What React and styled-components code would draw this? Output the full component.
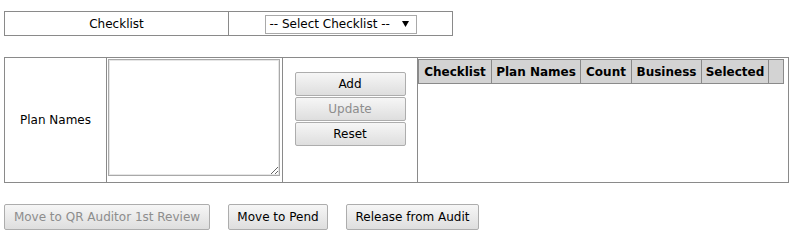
import React from "react";
import styled, { createGlobalStyle } from "styled-components";

const GlobalStyle = createGlobalStyle`
  html, body {
    margin: 0;
    padding: 0;
    background: #fff;
  }
  body {
    font-family: "DejaVu Sans", Verdana, sans-serif;
    font-size: 12px;
    color: #000;
  }
`;

const Page = styled.div`
  padding: 11px 0 0 4px;
`;

const TopTable = styled.div`
  box-sizing: border-box;
  width: 449px;
  height: 25px;
  border: 1px solid #8a8a8a;
  display: grid;
  grid-template-columns: 224px 1fr;
`;

const Cell = styled.div`
  box-sizing: border-box;
  display: flex;
  align-items: ${p => (p.$top ? "flex-start" : "center")};
  justify-content: center;
  border-right: ${p => (p.$last ? "none" : "1px solid #8a8a8a")};
`;

const FakeSelect = styled.div`
  box-sizing: border-box;
  width: 152px;
  height: 19px;
  margin-top: 1px;
  border: 1px solid #a9a9a9;
  display: flex;
  align-items: center;
  justify-content: space-between;
  padding: 0 7px 0 4px;
  background: #fff;
  color: #000;
`;

const MainTable = styled.div`
  box-sizing: border-box;
  margin-top: 21px;
  width: 785px;
  height: 126px;
  border: 1px solid #8a8a8a;
  display: grid;
  grid-template-columns: 102px 176px 135px 1fr;
`;

const TextCell = styled(Cell)`
  align-items: flex-start;
  justify-content: flex-start;
  padding: 1px 0 0 1px;
`;

const PlanArea = styled.textarea`
  box-sizing: border-box;
  width: 172px;
  height: 117px;
  margin: 0;
  border: 1px solid #a9a9a9;
  outline: 1px solid #e6e6e6;
  outline-offset: -2px;
  resize: both;
  font-family: "DejaVu Sans", Verdana, sans-serif;
  font-size: 12px;
`;

const ButtonStack = styled(Cell)`
  flex-direction: column;
  align-items: center;
  justify-content: flex-start;
  padding-top: 14px;
  gap: 1px;
`;

const Button = styled.button`
  box-sizing: border-box;
  width: ${p => p.$w}px;
  height: ${p => p.$h || 24}px;
  margin: 0;
  padding: 0;
  border: 1px solid #adadad;
  border-radius: 2px;
  background: linear-gradient(#f6f6f6, #dedede);
  font-family: "DejaVu Sans", Verdana, sans-serif;
  font-size: 12px;
  color: ${p => (p.disabled ? "#8d8d8d" : "#000")};
`;

const GridCell = styled.div`
  padding-top: 1px;
`;

const HeaderRow = styled.div`
  box-sizing: border-box;
  display: flex;
  width: 366px;
  height: 25px;
  border: 1px solid #8a8a8a;
  border-right: none;
  background: #d3d3d3;
`;

const HeaderCell = styled.div`
  box-sizing: border-box;
  width: ${p => p.$w}px;
  border-right: 1px solid #8a8a8a;
  display: flex;
  align-items: center;
  justify-content: center;
  font-weight: bold;
  white-space: nowrap;
`;

const ActionRow = styled.div`
  margin-top: 21px;
  display: flex;
  gap: 18px;
`;

const Arrow = () => (
  <svg width="7" height="6" viewBox="0 0 7 6">
    <path d="M0 0 H7 L3.5 6 Z" fill="#000" />
  </svg>
);

const columns = [
  ["Checklist", 73],
  ["Plan Names", 89],
  ["Count", 51],
  ["Business", 70],
  ["Selected", 67],
  ["", 15],
];

export default function App() {
  return (
    <Page>
      <GlobalStyle />
      <TopTable>
        <Cell>Checklist</Cell>
        <Cell $last>
          <FakeSelect>
            <span>-- Select Checklist --</span>
            <Arrow />
          </FakeSelect>
        </Cell>
      </TopTable>

      <MainTable>
        <Cell>Plan Names</Cell>
        <TextCell>
          <PlanArea />
        </TextCell>
        <ButtonStack>
          <Button $w={111}>Add</Button>
          <Button $w={111} disabled>
            Update
          </Button>
          <Button $w={111}>Reset</Button>
        </ButtonStack>
        <GridCell>
          <HeaderRow>
            {columns.map(([label, w], i) => (
              <HeaderCell key={i} $w={w}>
                {label}
              </HeaderCell>
            ))}
          </HeaderRow>
        </GridCell>
      </MainTable>

      <ActionRow>
        <Button $w={206} $h={26} disabled>
          Move to QR Auditor 1st Review
        </Button>
        <Button $w={100} $h={26}>
          Move to Pend
        </Button>
        <Button $w={133} $h={26}>
          Release from Audit
        </Button>
      </ActionRow>
    </Page>
  );
}
